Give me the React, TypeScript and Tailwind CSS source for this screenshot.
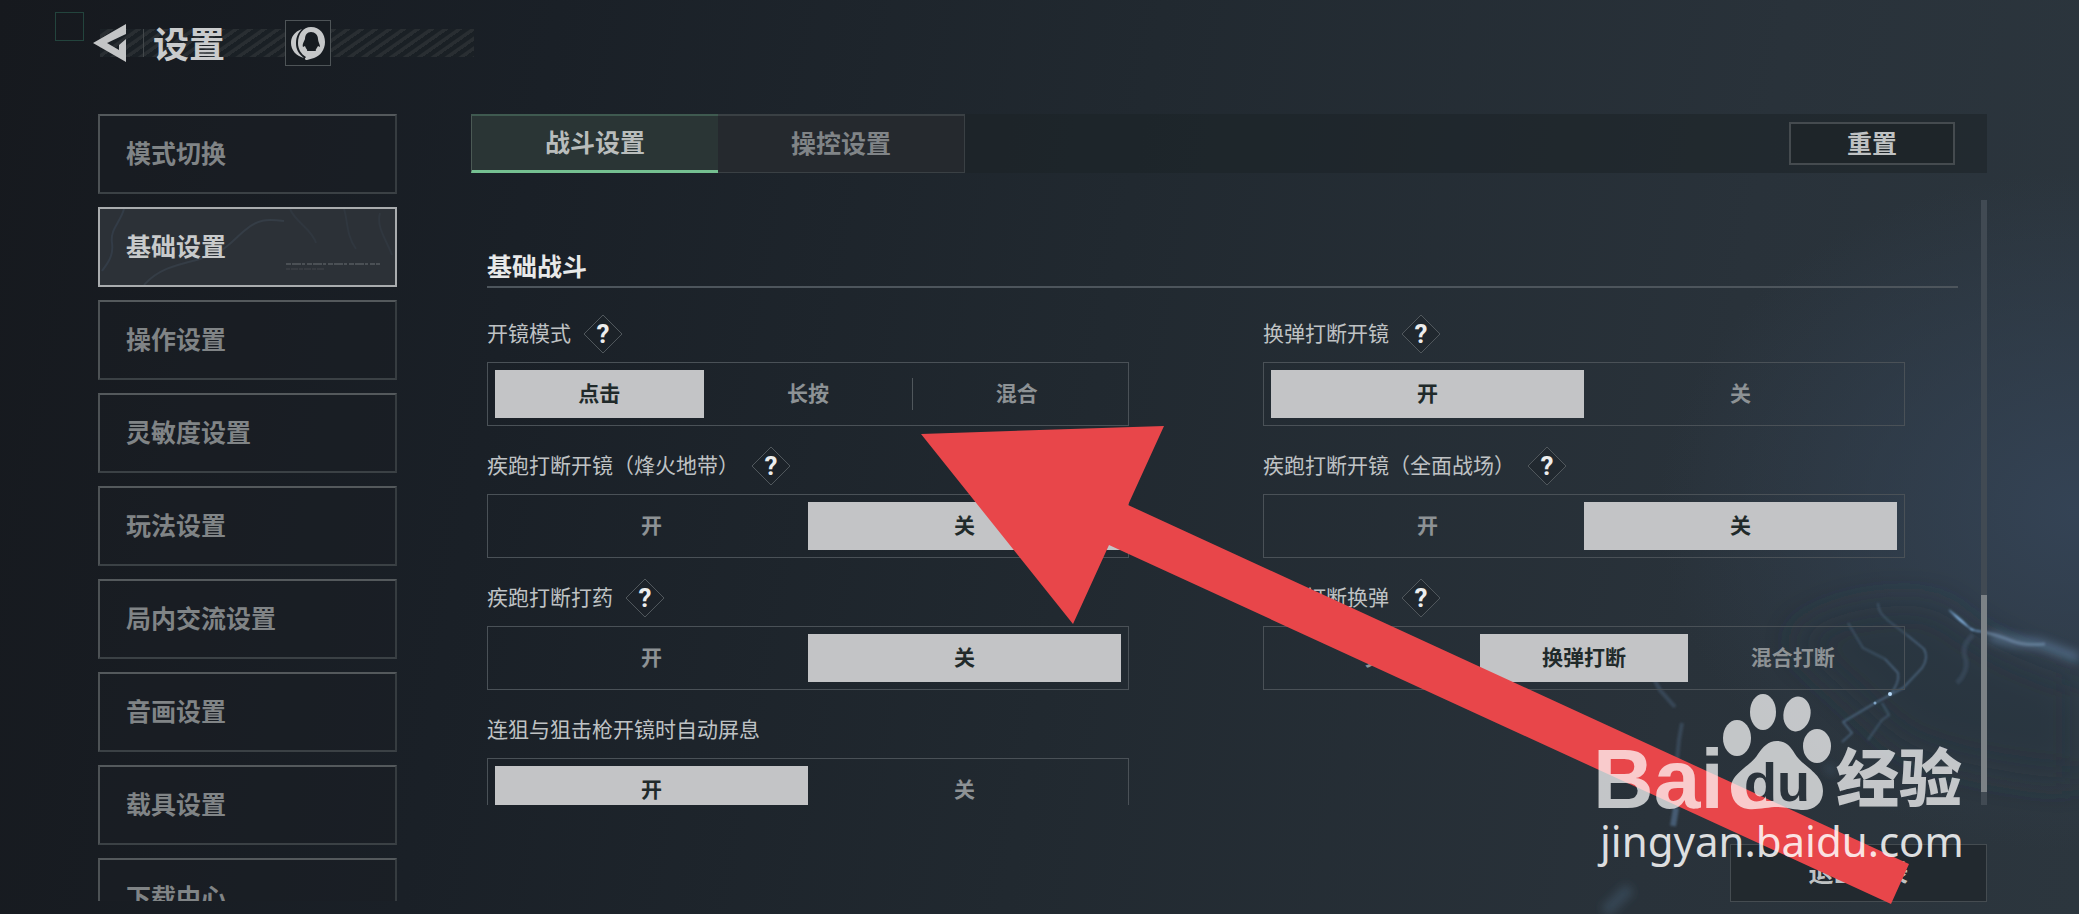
import React, { useState } from 'react';

interface Setting {
    label: string;
    help?: boolean;
    options: string[];
    selected: number;
}

const navItems = [
    '模式切换',
    '基础设置',
    '操作设置',
    '灵敏度设置',
    '玩法设置',
    '局内交流设置',
    '音画设置',
    '载具设置',
    '下载中心',
];

const tabs = ['战斗设置', '操控设置'];

const settings: Setting[] = [
    { label: '开镜模式', help: true, options: ['点击', '长按', '混合'], selected: 0 },
    { label: '换弹打断开镜', help: true, options: ['开', '关'], selected: 0 },
    { label: '疾跑打断开镜（烽火地带）', help: true, options: ['开', '关'], selected: 1 },
    { label: '疾跑打断开镜（全面战场）', help: true, options: ['开', '关'], selected: 1 },
    { label: '疾跑打断打药', help: true, options: ['开', '关'], selected: 1 },
    { label: '疾跑打断换弹', help: true, options: ['关', '换弹打断', '混合打断'], selected: 1 },
    { label: '连狙与狙击枪开镜时自动屏息', options: ['开', '关'], selected: 0 },
];

const HelpButton: React.FC<{ label: string }> = ({ label }) => (
    <button type="button" aria-label={label} className="relative grid h-10 w-10 place-items-center">
        <svg viewBox="0 0 40 40" className="absolute inset-0 h-10 w-10" aria-hidden="true">
            <path d="M20 1 39 20 20 39 1 20Z" fill="#1b2227" fillOpacity="0.5" stroke="#50575c" />
        </svg>
        <span className="relative font-['Roboto','Liberation_Sans',sans-serif] text-[26px] leading-none font-bold text-[#eceded]">
            ?
        </span>
    </button>
);

const SettingRow: React.FC<{ setting: Setting }> = ({ setting }) => {
    const [value, setValue] = useState(setting.selected);

    return (
        <div className="flex flex-col gap-2">
            <div className="flex h-10 items-center gap-3">
                <span className="pb-1 text-[21px] leading-9 text-[#bfc2c4]">{setting.label}</span>
                {setting.help && <HelpButton label={setting.label} />}
            </div>
            <div role="group" aria-label={setting.label} className="flex h-16 border border-[#4a5157] p-[7px]">
                {setting.options.map((option, index) => {
                    const active = index === value;
                    const divided = index > 0 && !active && index - 1 !== value;
                    return (
                        <button
                            key={option}
                            type="button"
                            aria-pressed={active}
                            onClick={() => setValue(index)}
                            className={`relative flex-1 pb-1 text-[21px] leading-8 font-bold ${
                                active ? 'bg-[#c3c4c6] text-[#212a2a]' : 'text-[#8d9295]'
                            }`}
                        >
                            {divided && <span className="absolute top-2 left-0 h-8 w-px bg-[#50575c]" />}
                            {option}
                        </button>
                    );
                })}
            </div>
        </div>
    );
};

/* Contour lines behind the selected navigation entry */
const NavTexture = () => (
    <svg viewBox="0 0 295 76" preserveAspectRatio="none" className="absolute inset-0 h-full w-full" fill="none" aria-hidden="true">
        <path d="M24 0C20 14 10 20 12 34S6 56 2 62" stroke="#333c47" strokeWidth="2" />
        <path d="M44 76C58 60 76 56 100 50S130 34 144 22S166 10 184 12" stroke="#353d46" strokeWidth="2" />
        <path d="M190 0C196 14 212 20 216 34M244 0C248 12 246 26 256 40M280 4C276 18 286 30 292 46" stroke="#30373f" strokeWidth="2" />
        <path d="M186 55H280" stroke="#4b5055" strokeWidth="2" strokeDasharray="5 1 9 1 3 2" />
        <path d="M186 60H224" stroke="#42474c" strokeDasharray="4 1 7 1" />
    </svg>
);

const Sidebar = () => {
    const [current, setCurrent] = useState('基础设置');

    return (
        <nav className="mb-[13px] ml-[98px] w-[299px] shrink-0 overflow-hidden">
            <ul className="flex flex-col gap-[13px]">
                {navItems.map((item) => (
                    <li key={item}>
                        <button
                            type="button"
                            onClick={() => setCurrent(item)}
                            className={`relative block h-20 w-full border-2 pb-1 pl-[26px] text-left text-[25px] leading-9 font-bold ${
                                item === current
                                    ? 'border-[#a9acae] bg-[#2c3137] text-[#c8cacb]'
                                    : 'border-t-[#54595c] border-r-[#363c40] border-b-[#3b4145] border-l-[#4d5255] bg-[#191e23]/50 text-[#808486]'
                            }`}
                        >
                            {item === current && <NavTexture />}
                            <span className="relative">{item}</span>
                        </button>
                    </li>
                ))}
            </ul>
        </nav>
    );
};

const Header = () => (
    <header className="relative mt-5 ml-[93px] flex h-[46px] shrink-0 items-center">
        <div className="absolute top-[9px] left-[7px] h-7 w-[374px] bg-[repeating-linear-gradient(145deg,#1a2025_0px,#1a2025_4px,#292e32_5px,#292e32_8px)]" />
        <button type="button" aria-label="返回" className="relative">
            <svg width="34" height="40" viewBox="0 0 34 40" aria-hidden="true">
                <path d="M33 1V11L14 20L26 27V22L33 16V39L0 20Z" fill="#c3c5c6" />
            </svg>
        </button>
        <span className="relative ml-4 h-7 w-px bg-[#43484b]" />
        <h1 className="relative ml-[9px] pb-0.5 text-4xl font-bold text-[#c9cbcc]">设置</h1>
        <button
            type="button"
            aria-label="QQ"
            className="relative ml-[60px] grid h-[46px] w-[46px] place-items-center border border-[#4e5457] bg-[#171c21]"
        >
            <svg width="36" height="36" viewBox="0 0 36 36" aria-hidden="true">
                <path
                    d="M21 2C30 2 35 9 35 17C35 25 30 31 24 33L17 35C15 35 14 34 16 32C11 29 8 24 8 18C8 9 13 2 21 2ZM21 7C17 7 15 10 15 14C14 17 12 19 13 22L15 21C16 24 18 25 17 26H26C25 25 27 23 28 21L30 22C30 19 28 17 28 14C28 10 25 7 21 7Z"
                    fill="#c6c8c9"
                    fillRule="evenodd"
                />
                <path d="M12 4C4 7 1 12 1 18C1 25 6 31 14 33C8 28 6 24 6 18C6 12 8 8 12 4Z" fill="#c6c8c9" />
            </svg>
        </button>
    </header>
);

const TabBar = () => {
    const [tab, setTab] = useState(tabs[0]);

    return (
        <div className="flex h-[59px] shrink-0 items-center justify-between bg-[#1b2226]/55 pr-8">
            <div className="flex h-full">
                {tabs.map((name) => (
                    <button
                        key={name}
                        type="button"
                        onClick={() => setTab(name)}
                        className={`w-[247px] border-t-2 pb-1 text-[25px] leading-9 font-bold ${
                            name === tab
                                ? 'border-b-[3px] border-l border-t-[#3f5a50] border-b-[#75c091] border-l-[#4b5a55] bg-[#2a3535] text-[#b9bdbc]'
                                : 'border-r border-b border-[#3a4044] bg-[#25292e] text-[#808487]'
                        }`}
                    >
                        {name}
                    </button>
                ))}
            </div>
            <button
                type="button"
                className="h-[43px] w-[166px] border-2 border-[#454b4f] bg-[#1e2529] pb-1 text-[25px] leading-9 font-bold text-[#bfc2c3]"
            >
                重置
            </button>
        </div>
    );
};

const Lightning = () => (
    <svg viewBox="1500 560 579 354" className="absolute right-0 bottom-0 h-[354px] w-[579px]" fill="none" aria-hidden="true">
        <defs>
            <filter id="soft" x="-20%" y="-20%" width="140%" height="140%">
                <feGaussianBlur stdDeviation="1" />
            </filter>
            <filter id="haze" x="-50%" y="-50%" width="200%" height="200%">
                <feGaussianBlur stdDeviation="5" />
            </filter>
            <filter id="cloud" x="-50%" y="-50%" width="200%" height="200%">
                <feGaussianBlur stdDeviation="18" />
            </filter>
        </defs>
        <path d="M1790 640Q1850 596 1940 608Q1980 650 2079 680V780Q1960 770 1900 740Z" fill="#28323b" fillOpacity="0.6" filter="url(#cloud)" />
        <g stroke="#4d6781" filter="url(#soft)">
            <path d="M1878 603C1878 612 1883 616 1890 622L1907 635" strokeOpacity="0.5" strokeWidth="2" />
            <path d="M1907 635 1924 649Q1929 658 1922 668L1903 688 1890 695 1875 703 1843 722 1852 733 1842 742" strokeWidth="1.6" />
            <path d="M1848 623 1863 648 1885 659" strokeOpacity="0.5" strokeWidth="2" />
            <path d="M1885 659 1898 673Q1900 682 1890 695" strokeWidth="1.6" />
            <path d="M1882 703 1889 715 1882 720 1868 740" strokeOpacity="0.6" strokeWidth="2" />
            <path d="M1973 635Q1960 646 1966 660Q1968 672 1957 683" strokeOpacity="0.3" strokeWidth="5" />
            <path d="M1653 677 1660 690 1675 707M1682 723 1679 740 1677 760" strokeOpacity="0.4" strokeWidth="4" />
            <path d="M1676 808 1673 826" strokeOpacity="0.8" strokeWidth="6" />
        </g>
        <g filter="url(#haze)">
            <path d="M1990 636 2012 641 2040 644 2079 658" stroke="#5f7d9c" strokeOpacity="0.7" strokeWidth="9" />
            <path d="M1832 767 1828 772M1630 888 1605 912" stroke="#4c6680" strokeOpacity="0.4" strokeWidth="12" />
        </g>
        <path d="M1949 610Q1966 622 1971 630L1984 632Q1968 632 1949 610Z" fill="#93c4f2" stroke="#6f9ac4" filter="url(#soft)" />
        <path d="M1984 632Q2000 636 2012 641T2045 644" stroke="#7e9cba" strokeOpacity="0.5" strokeWidth="3" filter="url(#soft)" />
        <circle cx="1890" cy="694" r="2" fill="#b9dcfb" />
        <circle cx="1875" cy="703" r="1.5" fill="#7fa3c4" />
    </svg>
);

const Watermark = () => (
    <svg viewBox="1590 690 385 190" className="pointer-events-none absolute right-[104px] bottom-[34px] h-[190px] w-[385px]">
        <defs>
            <mask id="paw" maskUnits="userSpaceOnUse" x="1590" y="690" width="385" height="190">
                <rect x="1590" y="690" width="385" height="190" fill="#fff" />
                <text x="1744" y="801" fill="#000" className="font-['Liberation_Sans',sans-serif] text-[54px] font-bold">
                    du
                </text>
            </mask>
        </defs>
        <g fill="#fff" fillOpacity="0.72">
            <text x="1593" y="808" className="font-['Liberation_Sans',sans-serif] text-[84px] font-bold">
                Bai
            </text>
            <ellipse cx="1737" cy="738" rx="14" ry="18" />
            <ellipse cx="1763" cy="712" rx="13" ry="18" />
            <ellipse cx="1797" cy="714" rx="13.5" ry="17.5" transform="rotate(10 1797 714)" />
            <ellipse cx="1817" cy="746" rx="14" ry="17" />
            <path
                d="M1777 741C1786 741 1791 747 1795 754C1803 767 1823 773 1823 791C1823 804 1813 811 1801 810C1791 809 1785 807 1777 807S1757 810 1748 809C1737 808 1731 799 1731 788C1731 773 1751 766 1758 754C1763 747 1768 741 1777 741Z"
                mask="url(#paw)"
            />
            <text x="1836" y="801" className="font-['Noto_Sans_CJK_SC',sans-serif] text-[63px] font-black">
                经验
            </text>
        </g>
        <text x="1600" y="857" fill="#fff" fillOpacity="0.85" className="font-['Noto_Sans','Open_Sans',sans-serif] text-[42px]">
            jingyan.baidu.com
        </text>
    </svg>
);

export default function App() {
    return (
        <div className="relative flex h-screen flex-col overflow-hidden bg-[radial-gradient(ellipse_420px_340px_at_100%_56%,#344355_0%,transparent_100%),linear-gradient(100deg,#16191e_0%,#1a2027_25%,#212930_52%,#29323a_80%,#2c363e_100%)] font-['Noto_Sans_CJK_SC',sans-serif]">
            <Lightning />
            <div className="absolute top-3 left-[55px] h-[29px] w-[29px] border border-[#23443d]" />
            <Header />

            <div className="relative mt-12 flex min-h-0 flex-1">
                <Sidebar />

                <main className="mr-[92px] ml-[74px] flex min-w-0 flex-1 flex-col">
                    <TabBar />

                    {/* Scrolling list */}
                    <div className="mt-[27px] flex min-h-0 flex-1 gap-[23px] overflow-hidden pl-4">
                        <section className="flex-1 pt-[46px]">
                            <h2 className="border-b-2 border-[#4d555c] pb-0.5 text-[25px] leading-[38px] font-bold text-[#e8e9e9]">
                                基础战斗
                            </h2>
                            <div className="grid grid-cols-2 gap-x-[134px] gap-y-5 pt-[26px] pr-[53px]">
                                {settings.map((setting) => (
                                    <SettingRow key={setting.label} setting={setting} />
                                ))}
                            </div>
                        </section>
                        <div className="flex w-[6px] shrink-0 flex-col justify-end bg-[#414a53] pb-[13px]">
                            <div className="h-1/3 bg-[#7c8286]" />
                        </div>
                    </div>

                    <div className="mt-[39px] mb-3 flex shrink-0 justify-end">
                        <button
                            type="button"
                            className="h-[58px] w-[257px] border border-[#454c51] bg-[#20272c]/80 pb-1 text-[25px] leading-9 font-bold text-[#bfc2c3]"
                        >
                            退出登录
                        </button>
                    </div>
                </main>
            </div>

            {/* Pointer arrow */}
            <svg
                viewBox="921 426 988 478"
                className="pointer-events-none absolute top-[426px] left-[921px] h-[478px] w-[988px]"
                aria-hidden="true"
            >
                <path d="M921 434 1164 426 1128 505 1909 864 1891 904 1109 545 1073 624Z" fill="#e8464a" />
            </svg>
            <Watermark />
        </div>
    );
}
